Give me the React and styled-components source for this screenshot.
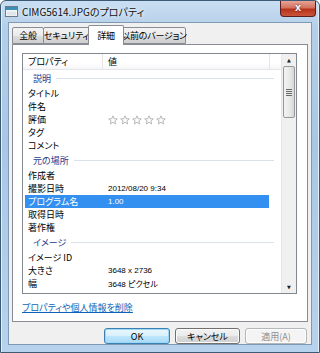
import styled, { createGlobalStyle } from "styled-components";

const GlobalStyle = createGlobalStyle`
  html, body { margin: 0; padding: 0; }
  body {
    width: 320px;
    height: 353px;
    overflow: hidden;
    background: #fff;
    font-family: "Noto Sans CJK JP", "Liberation Sans", sans-serif;
    font-feature-settings: "palt";
  }
  * { box-sizing: border-box; }
`;

const rows = [
  { group: "説明" },
  { name: "タイトル" },
  { name: "件名" },
  { name: "評価", stars: true },
  { name: "タグ" },
  { name: "コメント" },
  { group: "元の場所" },
  { name: "作成者" },
  { name: "撮影日時", value: "2012/08/20 9:34" },
  { name: "プログラム名", value: "1.00", selected: true },
  { name: "取得日時" },
  { name: "著作権" },
  { group: "イメージ" },
  { name: "イメージ ID" },
  { name: "大きさ", value: "3648 x 2736" },
  { name: "幅", value: "3648 ピクセル" },
];

// widths and left offsets measured from the screenshot
const tabs = [
  { label: "全般", width: 32, offset: 0 },
  { label: "セキュリティ", width: 47, offset: -1 },
  { label: "詳細", width: 36, offset: -2, active: true },
  { label: "以前のバージョン", width: 64, offset: -2 },
];

const Star = () => (
  <svg width="10" height="10" viewBox="0 0 10 10">
    <path
      d="M5 0.8 L6.2 3.7 L9.3 3.9 L6.9 5.9 L7.7 9 L5 7.3 L2.3 9 L3.1 5.9 L0.7 3.9 L3.8 3.7 Z"
      fill="#fbfbfb"
      stroke="#a9a9a9"
      strokeWidth="0.8"
      strokeLinejoin="round"
    />
  </svg>
);

const WinIcon = () => (
  <svg width="13" height="11" viewBox="0 0 13 11">
    <rect x="0.5" y="0.5" width="12" height="10" fill="#f4f6f8" stroke="#6d7b88" />
    <rect x="1" y="1" width="11" height="3" fill="#3e8fb8" />
    <rect x="2" y="5.5" width="9" height="4" fill="#e1e6ea" />
  </svg>
);

const App = () => {
  return (
    <>
      <GlobalStyle />
      <Window>
        <TitleBar>
          <WinIcon />
          <Title>CIMG5614.JPGのプロパティ</Title>
          <CloseButton>x</CloseButton>
        </TitleBar>
        <Client>
          <TabStrip>
            {tabs.map((t) => (
              <Tab key={t.label} active={t.active} w={t.width} offset={t.offset}>
                {t.label}
              </Tab>
            ))}
          </TabStrip>
          <Panel>
            <ListView>
              <ListBody>
                <Header>
                  <HeaderCell w={80}>プロパティ</HeaderCell>
                  <HeaderCell w={167}>値</HeaderCell>
                  <HeaderFill />
                </Header>
                {rows.map((r, i) =>
                  r.group ? (
                    <GroupRow key={i}>
                      <span>{r.group}</span>
                      <GroupLine />
                    </GroupRow>
                  ) : (
                    <Row key={i} selected={r.selected}>
                      <NameCell>{r.name}</NameCell>
                      <ValueCell>
                        {r.stars ? (
                          <Stars>
                            <Star />
                            <Star />
                            <Star />
                            <Star />
                            <Star />
                          </Stars>
                        ) : (
                          r.value
                        )}
                      </ValueCell>
                    </Row>
                  )
                )}
              </ListBody>
              <ScrollBar>
                <Arrow>▲</Arrow>
                <Track>
                  <Thumb>
                    <Grip />
                  </Thumb>
                </Track>
                <Arrow>▼</Arrow>
              </ScrollBar>
            </ListView>
            <Link>プロパティや個人情報を削除</Link>
          </Panel>
          <ButtonRow>
            <Button kind="default" w={66}>OK</Button>
            <Button w={65}>キャンセル</Button>
            <Button kind="disabled" w={62}>適用(A)</Button>
          </ButtonRow>
        </Client>
      </Window>
    </>
  );
};

export default App;

const Window = styled.div`
  width: 320px;
  height: 353px;
  border: 1px solid #3d5a75;
  border-radius: 6px 6px 0 0;
  background: linear-gradient(
    180deg,
    #c9def2 0%,
    #b3cfe9 8%,
    #a9c7e4 40%,
    #b7d2ec 100%
  );
  box-shadow: inset 1px 0 0 #e3eef9, inset -1px 0 0 #e3eef9;
  display: flex;
  flex-direction: column;
`;

const TitleBar = styled.div`
  height: 21px;
  display: flex;
  align-items: center;
  padding-left: 4px;
`;

const Title = styled.div`
  margin-left: 4px;
  font-size: 10px;
  color: #111;
  white-space: nowrap;
  text-shadow: 0 0 6px #e9f3fc, 0 0 3px #e9f3fc;
`;

const CloseButton = styled.div`
  margin-left: auto;
  margin-right: 3px;
  align-self: flex-start;
  width: 36px;
  height: 16px;
  border: 1px solid #5b1f1f;
  border-top: none;
  border-radius: 0 0 4px 4px;
  background: linear-gradient(180deg, #e8a395 0%, #d2735f 45%, #b7321b 55%, #c9553a 100%);
  color: #fff;
  font-family: "Liberation Sans", sans-serif;
  font-weight: bold;
  font-size: 11px;
  line-height: 13px;
  text-align: center;
  text-shadow: 0 0 2px #5b1f1f;
`;

const Client = styled.div`
  flex: 1;
  margin: 0 7px 7px 7px;
  background: #f0f0f0;
  border: 1px solid #7f9ab6;
  display: flex;
  flex-direction: column;
  padding: 0 3px;
`;

const TabStrip = styled.div`
  display: flex;
  align-items: flex-end;
  height: 21px;
  margin-top: 1px;
  position: relative;
  z-index: 1;
`;

const Tab = styled.div`
  flex: none;
  width: ${(p) => p.w}px;
  height: ${(p) => (p.active ? 20 : 17)}px;
  margin-left: ${(p) => p.offset}px;
  margin-bottom: ${(p) => (p.active ? 0 : 1)}px;
  border: 1px solid #898c95;
  border-bottom: ${(p) => (p.active ? "none" : "1px solid #898c95")};
  border-radius: 2px 2px 0 0;
  background: ${(p) =>
    p.active ? "#fff" : "linear-gradient(180deg, #f3f3f3 0%, #ebebeb 50%, #dddddd 51%, #cfcfcf 100%)"};
  position: relative;
  z-index: ${(p) => (p.active ? 2 : 1)};
  font-size: 9px;
  letter-spacing: -0.2px;
  color: #000;
  display: flex;
  align-items: center;
  justify-content: center;
  white-space: nowrap;
`;

const Panel = styled.div`
  height: 278px;
  margin-top: -1px;
  background: #fff;
  border: 1px solid #898c95;
  padding: 8px 10px 0 9px;
  display: flex;
  flex-direction: column;
`;

const ListView = styled.div`
  height: 241px;
  border: 1px solid #828790;
  display: flex;
  overflow: hidden;
`;

const ListBody = styled.div`
  flex: 1;
  overflow: hidden;
  font-size: 9px;
  color: #000;
`;

const Header = styled.div`
  height: 16px;
  display: flex;
  border-bottom: 1px solid #e3e6ea;
  background: linear-gradient(180deg, #ffffff 0%, #ffffff 60%, #f5f6f7 100%);
`;

const HeaderCell = styled.div`
  width: ${(p) => p.w}px;
  padding-left: 5px;
  border-right: 1px solid #e5e5e5;
  display: flex;
  align-items: center;
  white-space: nowrap;
`;

const HeaderFill = styled.div`
  flex: 1;
`;

const GroupRow = styled.div`
  height: 17px;
  display: flex;
  align-items: center;
  padding: 0 7px 0 10px;
  color: #1e3a8a;
  white-space: nowrap;
`;

const GroupLine = styled.div`
  flex: 1;
  height: 1px;
  margin-left: 5px;
  background: #d9e1ea;
`;

const Row = styled.div`
  height: 13px;
  width: 244px;
  margin-left: 2px;
  display: flex;
  align-items: center;
  background: ${(p) => (p.selected ? "#3390f0" : "transparent")};
  color: ${(p) => (p.selected ? "#fff" : "#000")};
  white-space: nowrap;
`;

const NameCell = styled.div`
  width: 83px;
  padding-left: 3px;
`;

const ValueCell = styled.div`
  font-family: "Liberation Sans", "Noto Sans CJK JP", sans-serif;
  font-size: 8px;
  display: flex;
  align-items: center;
`;

const Stars = styled.div`
  display: flex;
  gap: 2px;
`;

const ScrollBar = styled.div`
  width: 15px;
  display: flex;
  flex-direction: column;
  background: #f0f0f0;
  border-left: 1px solid #e6e6e6;
`;

const Arrow = styled.div`
  height: 12px;
  font-size: 5px;
  line-height: 12px;
  text-align: center;
  color: #222;
  font-family: "DejaVu Sans", sans-serif;
`;

const Track = styled.div`
  flex: 1;
  padding: 0 1px;
`;

const Thumb = styled.div`
  height: 52px;
  border: 1px solid #979797;
  border-radius: 2px;
  background: linear-gradient(90deg, #f2f2f2 0%, #eaeaea 50%, #d8d8d8 100%);
  display: flex;
  align-items: center;
  justify-content: center;
`;

const Grip = styled.div`
  width: 6px;
  height: 7px;
  background: repeating-linear-gradient(180deg, #6a6a6a 0 1px, #e9e9e9 1px 2px);
`;

const Link = styled.div`
  margin-top: 7px;
  font-size: 9px;
  color: #0b63b8;
  text-decoration: underline;
  white-space: nowrap;
`;

const ButtonRow = styled.div`
  display: flex;
  justify-content: flex-end;
  gap: 5px;
  padding: 6px 1px 0 0;
`;

const Button = styled.div`
  width: ${(p) => p.w}px;
  height: 16px;
  border-radius: 3px;
  border: 1px solid
    ${(p) => (p.kind === "default" ? "#3c7fb1" : p.kind === "disabled" ? "#b5b8ba" : "#707070")};
  background: ${(p) =>
    p.kind === "default"
      ? "linear-gradient(180deg, #eaf6fd 0%, #d9f0fc 50%, #bee6fd 51%, #a7d9f5 100%)"
      : p.kind === "disabled"
      ? "#f4f4f4"
      : "linear-gradient(180deg, #f2f2f2 0%, #ebebeb 50%, #dddddd 51%, #cfcfcf 100%)"};
  box-shadow: ${(p) => (p.kind === "default" ? "inset 0 0 0 1px #9cd7f6" : "inset 0 0 0 1px #fcfcfc")};
  color: ${(p) => (p.kind === "disabled" ? "#8d8d8d" : "#000")};
  font-size: 9px;
  display: flex;
  align-items: center;
  justify-content: center;
  white-space: nowrap;
`;
